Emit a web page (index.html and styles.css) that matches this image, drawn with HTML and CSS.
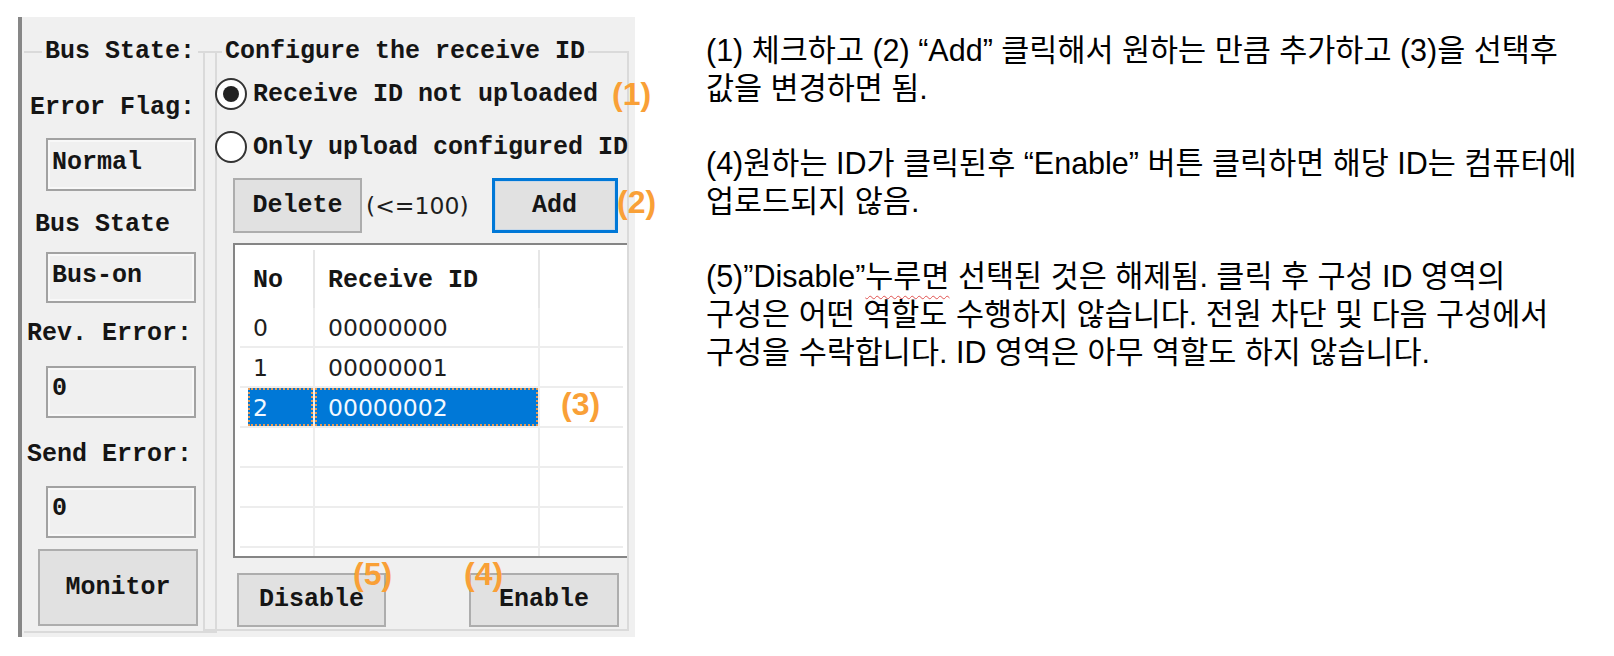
FILE: index.html
```html
<!DOCTYPE html>
<html lang="ko">
<head>
<meta charset="utf-8">
<title>Receive ID configuration</title>
<link rel="stylesheet" href="styles.css">
</head>
<body>
<div class="page">
  <div class="panel">
    <fieldset class="group group-status">
      <legend>Bus State:</legend>
      <div class="col">
        <div class="label lbl-err">Error Flag:</div>
        <div class="field fld-err">Normal</div>
        <div class="label lbl-bus">Bus State</div>
        <div class="field fld-bus">Bus-on</div>
        <div class="label lbl-rev">Rev. Error:</div>
        <div class="field fld-rev">0</div>
        <div class="label lbl-send">Send Error:</div>
        <div class="field fld-send">0</div>
        <button class="btn btn-monitor">Monitor</button>
      </div>
    </fieldset>
    <fieldset class="group group-config">
      <legend>Configure the receive ID</legend>
      <div class="col">
        <div class="radio-row row-first"><span class="radio checked"></span><span>Receive ID not uploaded</span></div>
        <div class="radio-row row-second"><span class="radio"></span><span>Only upload configured ID</span></div>
        <div class="actions">
          <button class="btn btn-delete">Delete</button>
          <span class="limit">(&lt;=100)</span>
          <button class="btn btn-add">Add</button>
        </div>
        <div class="list">
          <div class="list-head">
            <div class="hcell hc-no">No</div>
            <div class="hcell hc-id">Receive ID</div>
            <div class="hcell hc-rest"></div>
          </div>
          <div class="rows">
            <div class="row"><div class="cell">0</div><div class="cell">00000000</div><div class="cell c-rest"></div></div>
            <div class="row"><div class="cell">1</div><div class="cell">00000001</div><div class="cell c-rest"></div></div>
            <div class="row selected"><div class="cell"><span class="hl hl-first">2</span></div><div class="cell"><span class="hl">00000002</span></div><div class="cell c-rest"></div></div>
            <div class="row"><div class="cell"></div><div class="cell"></div><div class="cell c-rest"></div></div>
            <div class="row"><div class="cell"></div><div class="cell"></div><div class="cell c-rest"></div></div>
            <div class="row"><div class="cell"></div><div class="cell"></div><div class="cell c-rest"></div></div>
            <div class="row"><div class="cell"></div><div class="cell"></div><div class="cell c-rest"></div></div>
          </div>
        </div>
        <div class="bottom">
          <button class="btn btn-disable">Disable</button>
          <button class="btn btn-enable">Enable</button>
        </div>
      </div>
    </fieldset>
  </div>

  <div class="notes">
    <p class="p1">(1) 체크하고 (2) “Add” 클릭해서 원하는 만큼 추가하고 (3)을 선택후<br>값을 변경하면 됨.</p>
    <p class="p2">(4)원하는 ID가 클릭된후 “Enable” 버튼 클릭하면 해당 ID는 컴퓨터에<br>업로드되지 않음.</p>
    <p class="p3">(5)”Disable”<span class="typo">누루면</span> 선택된 것은 해제됨. 클릭 후 구성 ID 영역의<br>구성은 어떤 역할도 수행하지 않습니다. 전원 차단 및 다음 구성에서<br>구성을 수락합니다. ID 영역은 아무 역할도 하지 않습니다.</p>
  </div>

  <span class="callout c1">(1)</span>
  <span class="callout c2">(2)</span>
  <span class="callout c3">(3)</span>
  <span class="callout c5">(5)</span>
  <span class="callout c4">(4)</span>
</div>
</body>
</html>
```

FILE: styles.css
```css
* { box-sizing: border-box; }

html, body {
  margin: 0;
  padding: 0;
  background: #ffffff;
}

.page {
  position: relative;
  width: 1614px;
  height: 656px;
  display: flex;
  align-items: flex-start;
  overflow: hidden;
}

/* ---------- dialog panel ---------- */
.panel {
  flex: none;
  display: flex;
  align-items: flex-start;
  margin-left: 18px;
  margin-top: 17px;
  width: 617px;
  height: 620px;
  padding: 20px 6px 0 2px;
  background: #f0f0f0;
  border-left: 4px solid #878787;
  font-family: "Liberation Mono", "DejaVu Sans Mono", monospace;
  font-weight: bold;
  font-size: 25px;
  color: #151515;
}

.group {
  flex: none;
  margin: 0;
  padding: 0;
  min-width: 0;
  border: 2px solid #dadada;
}

.group legend {
  padding: 0 3px;
  line-height: 30px;
  white-space: pre;
}

.group-status {
  width: 193px;
  height: 596px;
  border-left: none;
}
.group-status legend { margin-left: 18px; }

.group-config {
  width: 426px;
  height: 594px;
  margin-left: -14px;
}
.group-config legend { margin-left: 17px; }

.col {
  display: flex;
  flex-direction: column;
  align-items: flex-start;
}

/* ---------- left status column ---------- */
.label {
  line-height: 30px;
  white-space: pre;
}
.lbl-err  { margin-top: 26px; margin-left: 6px; }
.lbl-bus  { margin-top: 19px; margin-left: 11px; }
.lbl-rev  { margin-top: 16px; margin-left: 3px; }
.lbl-send { margin-top: 22px; margin-left: 3px; }

.field {
  width: 150px;
  height: 52px;
  margin-left: 22px;
  padding: 6px 0 0 4px;
  line-height: 30px;
  background: #f0f0f0;
  border: 2px solid #a2a2a2;
  box-shadow: inset 0 0 0 2px #f8f8f8;
}
.fld-err  { margin-top: 15px; height: 53px; padding-top: 8px; }
.fld-bus  { margin-top: 12px; height: 51px; padding-top: 7px; }
.fld-rev  { margin-top: 17px; }
.fld-send { margin-top: 16px; }

.btn {
  margin: 0;
  padding: 0;
  font: inherit;
  color: inherit;
  background: #e1e1e1;
  border: 2px solid #adadad;
  text-align: center;
  line-height: 30px;
}

.btn-monitor {
  margin-top: 11px;
  margin-left: 14px;
  width: 160px;
  height: 77px;
}

/* ---------- right config group ---------- */
.radio-row {
  display: flex;
  align-items: center;
  height: 32px;
  white-space: pre;
}
.row-first  { margin-top: 11px; }
.row-second { margin-top: 21px; }

.radio {
  flex: none;
  width: 32px;
  height: 32px;
  margin-left: 10px;
  margin-right: 6px;
  border-radius: 50%;
  border: 2px solid #333333;
  background: #ffffff;
  display: flex;
  align-items: center;
  justify-content: center;
}
.radio.checked::after {
  content: "";
  width: 16px;
  height: 16px;
  border-radius: 50%;
  background: #222222;
}

.actions {
  display: flex;
  align-items: center;
  margin-top: 15px;
  margin-left: 28px;
}
.btn-delete {
  width: 129px;
  height: 55px;
}
.limit {
  margin-left: 4px;
  font-family: "DejaVu Sans", sans-serif;
  font-weight: normal;
  font-size: 23.5px;
  color: #1e1e1e;
}
.btn-add {
  margin-left: 23px;
  width: 126px;
  height: 55px;
  border: 3px solid #0078d7;
  box-shadow: inset 0 0 0 1px #c8d8e8;
}

.list {
  margin-top: 10px;
  margin-left: 28px;
  width: 394px;
  height: 315px;
  background: #ffffff;
  border: 2px solid #858585;
  border-right: none;
  overflow: hidden;
}

.list-head {
  display: grid;
  grid-template-columns: 80px 225px 1fr;
  height: 63px;
}
.hcell {
  margin-top: 5px;
  height: 58px;
  padding-top: 16px;
  line-height: 30px;
  border-right: 2px solid #e6e6e6;
  white-space: pre;
}
.hc-no { padding-left: 18px; }
.hc-id { padding-left: 13px; }
.hc-rest { border-right: none; }

.rows {
  margin-left: 5px;
  margin-right: 4px;
}
.row {
  display: grid;
  grid-template-columns: 75px 225px 1fr;
  height: 40px;
  border-bottom: 2px solid #ededed;
  font-family: "DejaVu Sans", sans-serif;
  font-weight: normal;
  font-size: 23.5px;
  color: #1e1e1e;
}
.cell {
  display: flex;
  padding-left: 13px;
  padding-top: 2px;
  line-height: 36px;
  border-right: 2px solid #ededed;
}
.cell.c-rest { border-right: none; }

.row.selected .cell { padding-left: 0; padding-top: 0; }
.hl {
  flex: 1;
  padding-left: 13px;
  padding-top: 2px;
  background: #0078d7;
  color: #f2f8ff;
  outline: 2px dotted #e99a52;
  outline-offset: -2px;
}
.hl.hl-first {
  margin-left: 8px;
  padding-left: 5px;
}

.bottom {
  display: flex;
  margin-top: 15px;
}
.btn-disable {
  margin-left: 32px;
  width: 149px;
  height: 54px;
}
.btn-enable {
  margin-left: 83px;
  width: 150px;
  height: 54px;
}

/* ---------- explanation text ---------- */
.notes {
  flex: none;
  margin-left: 71px;
  margin-top: 31px;
  font-family: "Liberation Sans", "Noto Sans CJK KR", sans-serif;
  font-size: 30.5px;
  line-height: 38px;
  color: #000000;
  white-space: nowrap;
}
.notes p { margin: 0; }
.notes .p2 { margin-top: 37px; }
.notes .p3 { margin-top: 37px; }

.typo {
  text-decoration: underline wavy #e0524f;
  text-decoration-thickness: 1px;
  text-underline-offset: 8px;
}

/* ---------- orange callouts over the screenshot ---------- */
.callout {
  position: absolute;
  font-family: "Liberation Sans", Arial, sans-serif;
  font-weight: bold;
  font-size: 32px;
  line-height: 32px;
  color: #f9a037;
  white-space: pre;
}
.c1 { left: 612px; top: 78px; }
.c2 { left: 617px; top: 186px; }
.c3 { left: 561px; top: 388px; }
.c5 { left: 353px; top: 558px; }
.c4 { left: 464px; top: 558px; }
```
